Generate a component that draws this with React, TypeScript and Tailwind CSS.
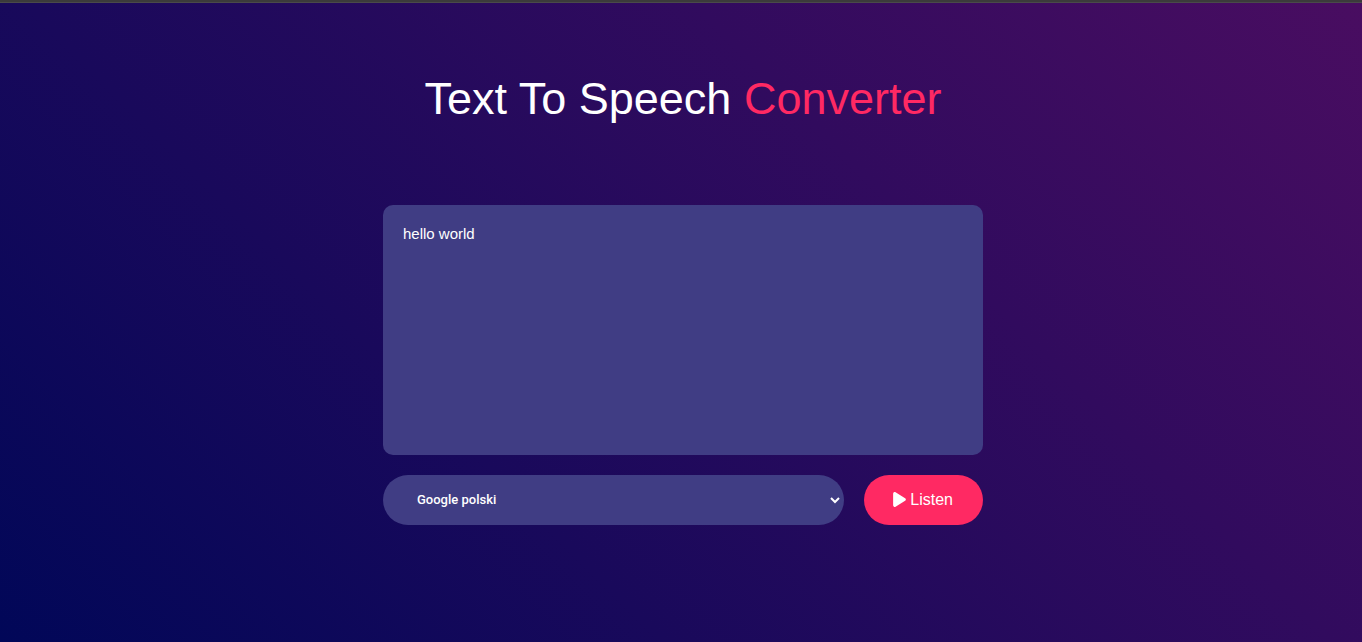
import { useState } from "react";
import { FaPlay } from "react-icons/fa6";

const voices = ["Google polski", "Google Deutsch", "Google US English", "Google español"];

export default function App() {
  const [text, setText] = useState("hello world");
  const [voice, setVoice] = useState(voices[0]);

  const speak = () => {
    const speech = new SpeechSynthesisUtterance(text);
    speech.voice = window.speechSynthesis.getVoices().find((v) => v.name === voice) ?? null;
    window.speechSynthesis.speak(speech);
  };

  return (
    <div className="flex min-h-screen flex-col font-['Liberation_Sans',Arial,sans-serif] text-white">
      <div className="h-[3px] border-b border-[#4a4a4a] bg-[#3b3b3b]" />
      <main className="flex grow flex-col items-center bg-[linear-gradient(45deg,#010758,#490d61)] pt-[70px] pb-10 pl-1">
        <h1 className="mb-20 text-[45px] leading-[52px] font-medium">
          Text To Speech <span className="text-[#ff2963]">Converter</span>
        </h1>
        <textarea
          aria-label="Text to speak"
          className="mb-5 block h-[250px] w-full max-w-[600px] resize-none rounded-[10px] bg-[#403d84] p-5 text-[15px] leading-[17px] outline-none"
          value={text}
          onChange={(e) => setText(e.target.value)}
        />
        <div className="flex w-full max-w-[600px] items-center gap-5">
          <select
            aria-label="Voice"
            className="h-[50px] min-w-0 flex-1 rounded-full border-r border-transparent bg-[#403d84] pb-0.5 pl-[30px] font-[Roboto,sans-serif] text-[13px] font-medium outline-none"
            value={voice}
            onChange={(e) => setVoice(e.target.value)}
          >
            {voices.map((v) => (
              <option key={v}>{v}</option>
            ))}
          </select>
          <button
            type="button"
            onClick={speak}
            className="flex h-[50px] items-center gap-1 rounded-full bg-[#ff2963] pr-[30px] pl-[29px] text-base"
          >
            <FaPlay className="mb-0.5 h-[17px] w-[13px]" aria-hidden="true" />
            Listen
          </button>
        </div>
      </main>
    </div>
  );
}
